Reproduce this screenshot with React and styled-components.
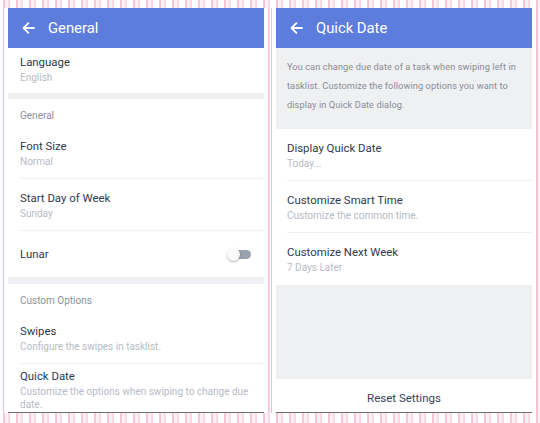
import React from 'react';
import styled, { createGlobalStyle } from 'styled-components';

const GlobalStyle = createGlobalStyle`
    html, body {
        margin: 0;
        padding: 0;
    }
    body {
        font-family: Roboto, "Liberation Sans", sans-serif;
        background: repeating-linear-gradient(
            90deg,
            #ffffff 0px,
            #ffffff 3px,
            #f6c6d5 3px,
            #f6c6d5 5px,
            #fdf0f4 5px,
            #fdf0f4 8px,
            #f9d9e3 8px,
            #f9d9e3 10px,
            #ffffff 10px,
            #ffffff 13px
        );
    }
`;

const Page = styled.div`
    width: 540px;
    height: 423px;
    box-sizing: border-box;
    padding: 8px 8px 10px 8px;
    display: flex;
    gap: 12px;
`;

const Panel = styled.div`
    flex: 1;
    display: flex;
    flex-direction: column;
    background: #fff;
    border-bottom: 1px solid #6e6e6e;
    overflow: hidden;
    box-shadow: -4px 0 0 #fff, 4px 0 0 #fff, -5px 0 0 #f3bfd0, 5px 0 0 #f3bfd0;
`;

const Header = styled.div`
    height: 40px;
    flex: none;
    background: #5c7ddc;
    display: flex;
    align-items: center;
    padding-left: ${p => p.$pad}px;
    gap: 13px;
    color: #fff;
    font-size: 14.8px;
`;

const Band = styled.div`
    height: ${p => p.$h || 6}px;
    background: #eef0f3;
    flex: none;
`;

const SectionLabel = styled.div`
    padding: 10px 0 4px 12px;
    line-height: 14px;
    font-size: 10px;
    color: #8a909b;
`;

const Row = styled.div`
    box-sizing: border-box;
    min-height: ${p => p.$min || 52}px;
    padding: ${p => p.$pt ?? 8}px 8px 8px 0;
    margin-left: ${p => p.$inset}px;
    display: flex;
    flex-direction: column;
    justify-content: center;
    border-bottom: ${p => (p.$last ? 'none' : '1px solid #eff1f3')};
`;

const Title = styled.div`
    font-size: 11.4px;
    line-height: 17px;
    color: #2f3a4c;
`;

const Sub = styled.div`
    font-size: 10px;
    line-height: 13px;
    color: #b6bcc5;
`;

const InlineRow = styled(Row)`
    flex-direction: row;
    align-items: center;
    justify-content: space-between;
    padding-right: 12px;
`;

const Track = styled.div`
    position: relative;
    width: 20px;
    height: 9px;
    border-radius: 5px;
    background: #9aa2ad;
    margin-right: 1px;
`;

const Knob = styled.div`
    position: absolute;
    left: -4px;
    top: -2px;
    width: 13px;
    height: 13px;
    border-radius: 50%;
    background: #fafafa;
    box-shadow: 0 1px 2px rgba(0, 0, 0, 0.3);
`;

const Description = styled.div`
    background: #eff0f2;
    padding: 9px 12px 15px 11px;
    font-size: 9.2px;
    letter-spacing: 0.1px;
    line-height: 19px;
    color: #878d98;
`;

const Filler = styled.div`
    flex: 1;
    background: #eff0f2;
`;

const Footer = styled.div`
    height: 33px;
    box-sizing: border-box;
    display: flex;
    align-items: center;
    justify-content: center;
    font-size: 11.5px;
    color: #3a4355;
    padding-top: 4px;
`;

const Arrow = () => (
    <svg width="13" height="12" viewBox="0 0 13 12" fill="none">
        <path d="M12 6H1.8M6.4 1.2L1.6 6l4.8 4.8" stroke="#fff" strokeWidth="1.8" strokeLinecap="round" strokeLinejoin="round" />
    </svg>
);

const Item = ({ title, sub, inset, last, pt, min }) => (
    <Row $inset={inset} $last={last} $pt={pt} $min={min}>
        <Title>{title}</Title>
        {sub && <Sub>{sub}</Sub>}
    </Row>
);

const App = () => (
    <>
        <GlobalStyle />
        <Page>
            <Panel>
                <Header $pad={14}>
                    <Arrow />
                    General
                </Header>
                <Item title="Language" sub="English" inset={12} last pt={4} min={45} />
                <Band $h={6} />
                <SectionLabel>General</SectionLabel>
                <Item title="Font Size" sub="Normal" inset={12} />
                <Item title="Start Day of Week" sub="Sunday" inset={12} />
                <InlineRow $inset={12} $last $min={46}>
                    <Title>Lunar</Title>
                    <Track>
                        <Knob />
                    </Track>
                </InlineRow>
                <Band $h={7} />
                <SectionLabel>Custom Options</SectionLabel>
                <Item title="Swipes" sub="Configure the swipes in tasklist." inset={12} />
                <Item
                    title="Quick Date"
                    sub="Customize the options when swiping to change due date."
                    inset={12}
                    pt={7}
                    last
                />
            </Panel>
            <Panel>
                <Header $pad={14}>
                    <Arrow />
                    Quick Date
                </Header>
                <Description>
                    You can change due date of a task when swiping left in tasklist. Customize the following options you want to display in Quick Date dialog.
                </Description>
                <Item title="Display Quick Date" sub="Today..." inset={11} />
                <Item title="Customize Smart Time" sub="Customize the common time." inset={11} />
                <Item title="Customize Next Week" sub="7 Days Later" inset={11} last />
                <Filler />
                <Footer>Reset Settings</Footer>
            </Panel>
        </Page>
    </>
);

export default App;
